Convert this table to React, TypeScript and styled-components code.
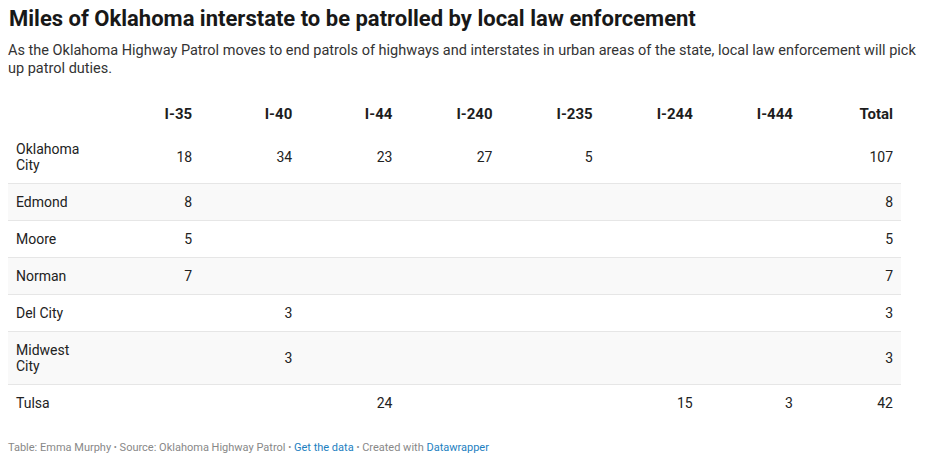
import React from "react";
import styled, { createGlobalStyle } from "styled-components";

const GlobalStyle = createGlobalStyle`
  html, body {
    margin: 0;
    padding: 0;
    background: #ffffff;
  }
  body {
    font-family: Roboto, "Liberation Sans", Arial, sans-serif;
    color: #333333;
  }
`;

const columns = ["I-35", "I-40", "I-44", "I-240", "I-235", "I-244", "I-444", "Total"];

type Row = { city: string; values: (number | null)[] };

const rows: Row[] = [
  { city: "Oklahoma City", values: [18, 34, 23, 27, 5, null, null, 107] },
  { city: "Edmond", values: [8, null, null, null, null, null, null, 8] },
  { city: "Moore", values: [5, null, null, null, null, null, null, 5] },
  { city: "Norman", values: [7, null, null, null, null, null, null, 7] },
  { city: "Del City", values: [null, 3, null, null, null, null, null, 3] },
  { city: "Midwest City", values: [null, 3, null, null, null, null, null, 3] },
  { city: "Tulsa", values: [null, null, 24, null, null, 15, 3, 42] },
];

export default function App() {
  return (
    <Chart>
      <GlobalStyle />
      <Title>Miles of Oklahoma interstate to be patrolled by local law enforcement</Title>
      <Description>
        As the Oklahoma Highway Patrol moves to end patrols of highways and interstates in urban
        areas of the state, local law enforcement will pick up patrol duties.
      </Description>
      <Table>
        <colgroup>
          <FirstCol />
          {columns.map((c) => (
            <col key={c} />
          ))}
        </colgroup>
        <thead>
          <tr>
            <HeadCell />
            {columns.map((c) => (
              <HeadCell key={c} $numeric>
                {c}
              </HeadCell>
            ))}
          </tr>
        </thead>
        <tbody>
          {rows.map((row, i) => (
            <BodyRow key={row.city} $striped={i % 2 === 1} $last={i === rows.length - 1}>
              <Cell>{row.city}</Cell>
              {row.values.map((v, j) => (
                <Cell key={j} $numeric>
                  {v ?? ""}
                </Cell>
              ))}
            </BodyRow>
          ))}
        </tbody>
      </Table>
      <Footer>
        Table: Emma Murphy <Dot>•</Dot> Source: Oklahoma Highway Patrol <Dot>•</Dot>{" "}
        <FooterLink>Get the data</FooterLink> <Dot>•</Dot> Created with{" "}
        <FooterLink>Datawrapper</FooterLink>
      </Footer>
    </Chart>
  );
}

const Chart = styled.div`
  padding: 6px 8px 0 8px;
  width: 915px;
`;

const Title = styled.h1`
  margin: 0 0 0 1px;
  font-size: 22px;
  line-height: 26px;
  font-weight: 700;
  color: #181818;
`;

const Description = styled.p`
  margin: 10px 0 0 0;
  width: 912px;
  font-size: 14.5px;
  line-height: 18px;
  color: #333333;
`;

const Table = styled.table`
  margin-top: 20px;
  width: 893px;
  border-collapse: collapse;
  table-layout: fixed;
  font-size: 14px;
  line-height: 16px;
`;

const FirstCol = styled.col`
  width: 92px;
`;

const HeadCell = styled.th<{ $numeric?: boolean }>`
  padding: 8px 8px 9px 8px;
  text-align: ${(p) => (p.$numeric ? "right" : "left")};
  font-size: 15px;
  font-weight: 700;
  color: #1d1d1d;
  vertical-align: bottom;
`;

const BodyRow = styled.tr<{ $striped: boolean; $last: boolean }>`
  background: ${(p) => (p.$striped ? "#f9f9f9" : "#ffffff")};
  border-bottom: ${(p) => (p.$last ? "none" : "1px solid #e6e6e6")};
`;

const Cell = styled.td<{ $numeric?: boolean }>`
  padding: 10px 8px;
  text-align: ${(p) => (p.$numeric ? "right" : "left")};
  color: #222222;
  vertical-align: middle;
`;

const Footer = styled.div`
  margin-top: 19px;
  font-size: 11px;
  line-height: 14px;
  color: #888888;
`;

const Dot = styled.span`
  font-size: 9px;
  vertical-align: 1px;
`;

const FooterLink = styled.span`
  color: #1d7fc1;
`;
